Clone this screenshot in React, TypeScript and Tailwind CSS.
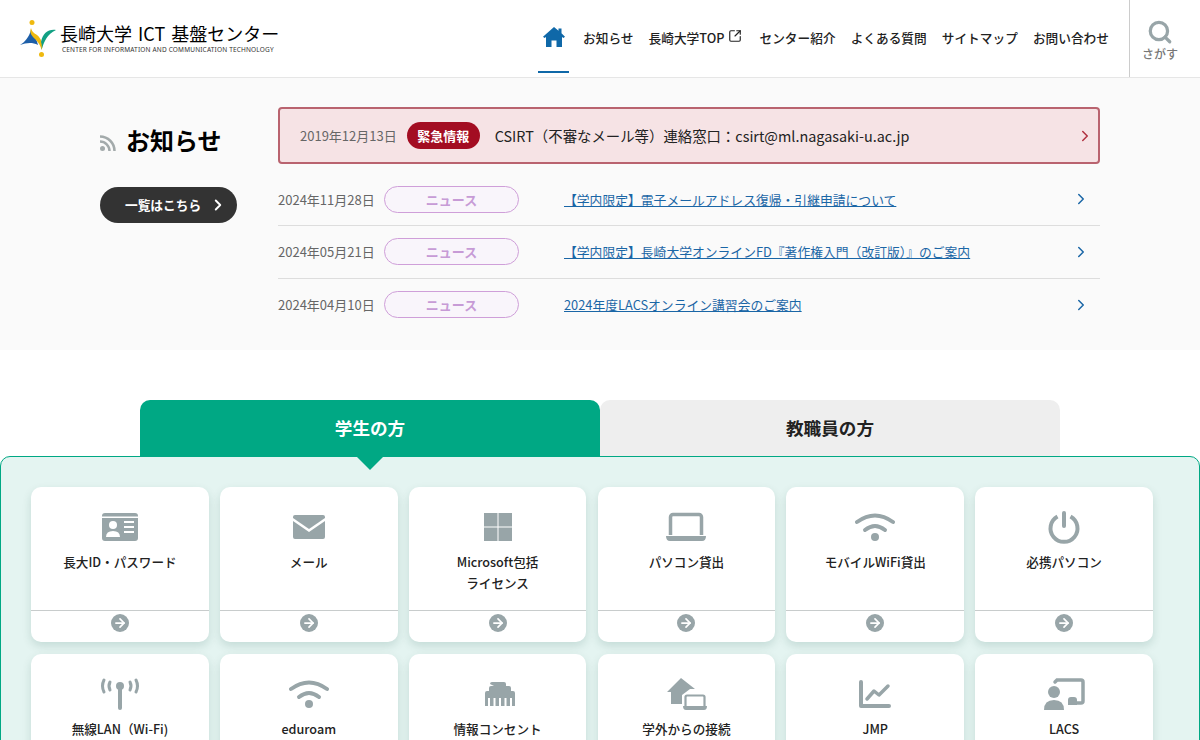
import type { ReactNode } from 'react'
import { ChevronRight, Search, SquareArrowOutUpRight, ArrowRight } from 'lucide-react'

const navItems = ['お知らせ', '長崎大学TOP', 'センター紹介', 'よくある質問', 'サイトマップ', 'お問い合わせ']

const newsItems = [
  { date: '2024年11月28日', title: '【学内限定】電子メールアドレス復帰・引継申請について' },
  { date: '2024年05月21日', title: '【学内限定】長崎大学オンラインFD『著作権入門（改訂版）』のご案内' },
  { date: '2024年04月10日', title: '2024年度LACSオンライン講習会のご案内' },
]

const WifiIcon = (
  <>
    <path d="M6 15 Q24 2 42 15" fill="none" strokeWidth="4" strokeLinecap="round" stroke="currentColor" />
    <path d="M14 23 Q24 15 34 23" fill="none" strokeWidth="4" strokeLinecap="round" stroke="currentColor" />
    <circle cx="24" cy="30" r="4" fill="currentColor" />
  </>
)

const cards: { label: ReactNode; icon: ReactNode }[] = [
  {
    label: '長大ID・パスワード',
    icon: (
      <>
        <path fill="currentColor" d="M6 9 a3 3 0 0 1 3-3 h30 a3 3 0 0 1 3 3 v0.5 H6z M6 11 H42 V31 a3 3 0 0 1-3 3 H9 a3 3 0 0 1-3-3z" />
        <circle cx="17" cy="18" r="4" fill="white" />
        <path fill="white" d="M10 30 q0-6 7-6 q7 0 7 6z" />
        <path fill="white" d="M28 14 h10 v2 h-10z M28 19 h10 v2 h-10z M28 24 h10 v2 h-10z" />
      </>
    ),
  },
  {
    label: 'メール',
    icon: (
      <>
        <path fill="currentColor" d="M8 10 a2 2 0 0 1 2-2 h28 a2 2 0 0 1 2 2 v1 L24 22 L8 11z" />
        <path fill="currentColor" d="M8 14 L24 25 L40 14 V30 a2 2 0 0 1-2 2 H10 a2 2 0 0 1-2-2z" />
      </>
    ),
  },
  {
    label: (
      <>
        Microsoft包括
        <br />
        ライセンス
      </>
    ),
    icon: <path fill="currentColor" d="M10 6 h13.5 v13.500 h-13.500z M24.500 6 h13.500 v13.500 h-13.500z M10 20.500 h13.500 v13.500 h-13.500z M24.500 20.500 h13.500 v13.500 h-13.500z" />,
  },
  {
    label: 'パソコン貸出',
    icon: (
      <>
        <path d="M8.500 28 V10 a2.500 2.500 0 0 1 2.500-2.500 h26 a2.500 2.500 0 0 1 2.500 2.500 V28" fill="none" stroke="currentColor" strokeWidth="3.500" />
        <path fill="currentColor" d="M4 29 h40 q0 5-4 5 H8 q-4 0-4-5z" />
      </>
    ),
  },
  { label: 'モバイルWiFi貸出', icon: WifiIcon },
  {
    label: '必携パソコン',
    icon: (
      <>
        <path d="M17.500 9.500 A13.500 13.500 0 1 0 30.500 9.500" fill="none" stroke="currentColor" strokeWidth="4" />
        <path d="M24 6 V19" fill="none" stroke="currentColor" strokeWidth="4" strokeLinecap="round" />
      </>
    ),
  },
  {
    label: '無線LAN（Wi-Fi)',
    icon: (
      <>
        <circle cx="24" cy="12" r="4" fill="currentColor" />
        <path d="M24 12 V34" stroke="currentColor" strokeWidth="4" strokeLinecap="round" fill="none" />
        <path d="M8 6 Q5 12 8 18 M14 8 Q12 12 14 16 M40 6 Q43 12 40 18 M34 8 Q36 12 34 16" stroke="currentColor" strokeWidth="3" strokeLinecap="round" fill="none" />
      </>
    ),
  },
  { label: 'eduroam', icon: WifiIcon },
  {
    label: '情報コンセント',
    icon: (
      <path
        fill="currentColor"
        d="M16 10 a2 2 0 0 1 2-2 h12 a2 2 0 0 1 2 2 v2 h3 a2 2 0 0 1 2 2 v3 h2 a2 2 0 0 1 2 2 v13 h-3 v-8 h-2 v8 h-3.500 v-8 h-2 v8 h-3.500 v-8 h-2 v8 h-3.500 v-8 h-2 v8 h-3.500 v-8 h-2 v8 h-3 V19 a2 2 0 0 1 2-2 h2 v-3 a2 2 0 0 1 2-2 h3z"
      />
    ),
  },
  {
    label: '学外からの接続',
    icon: (
      <>
        <path fill="currentColor" d="M19 4 L33 15 L28 15 L20 21 V30 H9 V18 H5z" />
        <path d="M23.500 32 V23 a1.500 1.500 0 0 1 1.500-1.500 h16 a1.500 1.500 0 0 1 1.500 1.500 V32" fill="none" stroke="currentColor" strokeWidth="2.200" />
        <path fill="currentColor" d="M21 32 h24 q0 4-3 4 H24 q-3 0-3-4z" />
      </>
    ),
  },
  {
    label: 'JMP',
    icon: (
      <>
        <path d="M10 8 V32 H38" fill="none" stroke="currentColor" strokeWidth="4" strokeLinecap="round" strokeLinejoin="round" />
        <path d="M16 25 L23 17 L28 21 L37 12" fill="none" stroke="currentColor" strokeWidth="3.500" strokeLinecap="round" strokeLinejoin="round" />
      </>
    ),
  },
  {
    label: 'LACS',
    icon: (
      <>
        <path d="M15 8 L17 6 H41 a2 2 0 0 1 2 2 V27 a2 2 0 0 1-2 2 H37" fill="none" stroke="currentColor" strokeWidth="3.500" strokeLinecap="round" />
        <circle cx="14" cy="18" r="6" fill="currentColor" />
        <path fill="currentColor" d="M4 36 q0-10 10-10 q10 0 10 10z" />
        <path fill="currentColor" d="M28 31 v-5 q0-3 3-3 h3 q3 0 3 3 v5z" />
      </>
    ),
  },
]

function Logo() {
  return (
    <svg width="38" height="40" viewBox="0 0 38 40" className="shrink-0">
      <circle cx="12" cy="4.500" r="2.500" fill="#efb90f" />
      <circle cx="21.500" cy="36.500" r="2.500" fill="#efb90f" />
      <path fill="#1e5fa8" d="M0 27 C5 24 9 19 11 12 C14 17 17 22 18 27 C12 24 6 25 0 27z" />
      <path fill="#efb90f" d="M11 10 C9 15 12 18 16 22 C19 25 21 29 21.500 32 C24 27 21 20 17 17 C14 15 12 14 11 10z" />
      <path fill="#12a083" d="M36 12 C28 11 23 15 21 24 C22 27 22 29 21.500 32 C24 24 27 16 36 12z" />
    </svg>
  )
}

function ServiceCard({ label, icon }: { label: ReactNode; icon: ReactNode }) {
  return (
    <a className="flex h-[155px] flex-col rounded-[10px] bg-white shadow-[0_4px_10px_rgba(0,70,60,0.14)]">
      <div className="flex h-[124px] flex-col items-center border-b border-[#c8cccc] pt-5">
        <svg width="48" height="40" viewBox="0 0 48 40" className="text-[#98a5a8]">
          {icon}
        </svg>
        <p className="mt-1 text-center text-[12.600px] leading-[21px] font-medium text-[#222]">{label}</p>
      </div>
      <div className="flex flex-1 justify-center pt-[3px]">
        <span className="flex size-[18px] items-center justify-center rounded-full bg-[#98a5a8] text-white">
          <ArrowRight size={14} strokeWidth={3} />
        </span>
      </div>
    </a>
  )
}

export default function App() {
  return (
    <div className="h-[740px] overflow-hidden bg-white font-['Noto_Sans_CJK_JP','Noto_Sans',sans-serif] text-[#222]">
      <header className="flex h-[78px] items-stretch border-b border-[#e6e6e6] pl-5">
        <div className="flex items-center pb-[2px]">
          <Logo />
          <div className="ml-[2px] flex flex-col">
            <span className="text-[18px] leading-[24px] font-normal [word-spacing:2px] whitespace-nowrap text-black">長崎大学 ICT 基盤センター</span>
            <span className="ml-[2px] font-['Noto_Sans',sans-serif] text-[6.500px] leading-[10px] tracking-[0.17px] whitespace-nowrap text-[#333]">CENTER FOR INFORMATION AND COMMUNICATION TECHNOLOGY</span>
          </div>
        </div>
        <nav className="ml-auto flex items-stretch pb-[2px]">
          <a className="mb-[2px] -mr-px flex w-[31px] items-center justify-center border-b-2 border-[#0f68a8] pt-[2px] text-[#0f68a8]">
            <svg width="22" height="20" viewBox="0 0 22 20">
              <path fill="currentColor" d="M11 0 L15.500 3.800 V1.500 H18.500 V6.300 L22 9.800 L20.500 11 L19 10 V20 H13.500 V13.500 H8.500 V20 H3 V10 L1.500 11 L0 9.800z" />
            </svg>
          </a>
          {navItems.map((item) => (
            <a key={item} className="ml-[15px] flex items-center gap-[3px] text-[12.700px] font-medium whitespace-nowrap">
              {item}
              {item === '長崎大学TOP' && <SquareArrowOutUpRight size={14} className="mr-[3px] mb-1" />}
            </a>
          ))}
        </nav>
        <div className="ml-5 flex w-[71px] flex-col items-center border-l border-[#ccc] pt-[19px] pr-[10px] text-[#98a5a8]">
          <Search size={26} strokeWidth={3} />
          <span className="text-[12px] font-medium text-[#777]">さがす</span>
        </div>
      </header>

      <section className="flex h-[272px] bg-[#fafafa] pt-[29px] pr-[100px] pl-[100px]">
        <div className="w-[178px] shrink-0">
          <div className="flex h-[68px] items-center pb-[2px]">
            <svg width="16" height="16" viewBox="0 0 16 16" className="mt-[6px] text-[#a3aaab]">
              <circle cx="2.500" cy="13.500" r="2.500" fill="currentColor" />
              <path d="M0 6.500 A9.500 9.500 0 0 1 9.500 16 M0 1.500 A14.500 14.500 0 0 1 14.500 16" stroke="currentColor" strokeWidth="2.500" fill="none" />
            </svg>
            <h2 className="ml-[10px] text-[24px] font-bold text-black">お知らせ</h2>
          </div>
          <a className="mt-3 flex h-9 w-[137px] items-center gap-[8px] rounded-full bg-[#333] pl-[25px] text-[12.700px] font-bold whitespace-nowrap text-white">
            一覧はこちら
            <ChevronRight size={18} strokeWidth={2.5} />
          </a>
        </div>
        <div className="min-w-0 flex-1">
          <div className="flex h-[57px] items-center rounded border-2 border-[#b9636f] bg-[#f6e3e5] pr-[4px] pl-5">
            <span className="text-[13px] text-[#666]">2019年12月13日</span>
            <span className="ml-[10px] flex h-[27px] w-[73px] items-center justify-center rounded-full bg-[#a30d22] text-[13px] font-bold text-white">緊急情報</span>
            <span className="ml-[15px] text-[14.400px] text-[#222]">CSIRT（不審なメール等）連絡窓口：csirt@ml.nagasaki-u.ac.jp</span>
            <ChevronRight size={18} strokeWidth={2} className="ml-auto text-[#b0303f]" />
          </div>
          <ul className="mt-[10px]">
            {newsItems.map((n, i) => (
              <li key={n.date} className={`flex h-[52.750px] items-center pr-[10px] first:h-[51.750px] ${i < 2 ? 'border-b border-[#ddd]' : ''}`}>
                <span className="w-[106px] shrink-0 text-[13px] text-[#666]">{n.date}</span>
                <span className="flex h-[27px] w-[135px] shrink-0 items-center justify-center rounded-full border border-[#cf9fd9] bg-[#f9f5fb] text-[13px] font-bold text-[#c79bd6]">ニュース</span>
                <a className="ml-[45px] text-[12.800px] text-[#1a66a6] underline">{n.title}</a>
                <ChevronRight size={18} strokeWidth={2} className="ml-auto text-[#1a66a6]" />
              </li>
            ))}
          </ul>
        </div>
      </section>

      <section className="pt-[50px]">
        <div className="mx-[140px] flex h-[57px]">
          <div className="flex flex-1 items-center justify-center rounded-t-[10px] bg-[#00a884] pb-[1px] text-[17.600px] font-bold text-white">学生の方</div>
          <div className="flex flex-1 items-center justify-center rounded-t-[10px] bg-[#eeeeee] pb-[1px] text-[17.600px] font-bold text-[#222]">教職員の方</div>
        </div>
        <div className="relative -mt-px rounded-t-[10px] border border-[#00a884] bg-[#e4f4f1] pt-[30px] pr-[46.100px] pl-[30.100px]">
          <svg width="26" height="13" viewBox="0 0 26 13" className="absolute top-[0px] left-[356px] text-[#00a884]">
            <path d="M0 0 H26 L13 13z" fill="currentColor" />
          </svg>
          <div className="grid grid-cols-6 gap-x-[11.200px] gap-y-3">
            {cards.map((c, i) => (
              <ServiceCard key={i} label={c.label} icon={c.icon} />
            ))}
          </div>
        </div>
      </section>
    </div>
  )
}
